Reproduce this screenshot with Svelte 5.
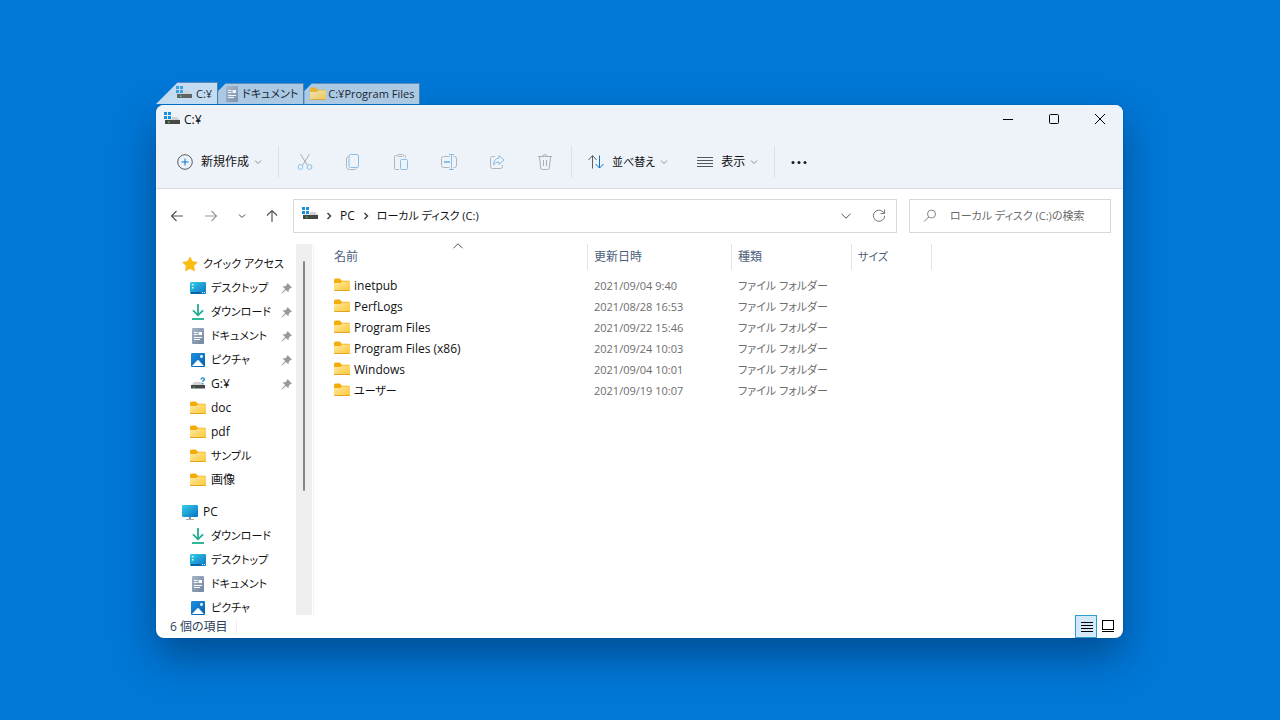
<script>
	const tabs = [
		{ label: 'C:¥', icon: 'drive' },
		{ label: 'ドキュメント', icon: 'document' },
		{ label: 'C:¥Program Files', icon: 'folder' }
	];

	const groups = [
		{
			label: 'クイック アクセス',
			icon: 'star',
			items: [
				{ label: 'デスクトップ', icon: 'desktop', pinned: true },
				{ label: 'ダウンロード', icon: 'download', pinned: true },
				{ label: 'ドキュメント', icon: 'document', pinned: true },
				{ label: 'ピクチャ', icon: 'picture', pinned: true },
				{ label: 'G:¥', icon: 'unknown', pinned: true },
				{ label: 'doc', icon: 'folder' },
				{ label: 'pdf', icon: 'folder' },
				{ label: 'サンプル', icon: 'folder' },
				{ label: '画像', icon: 'folder' }
			]
		},
		{
			label: 'PC',
			icon: 'pc',
			items: [
				{ label: 'ダウンロード', icon: 'download' },
				{ label: 'デスクトップ', icon: 'desktop' },
				{ label: 'ドキュメント', icon: 'document' },
				{ label: 'ピクチャ', icon: 'picture' }
			]
		}
	];

	const files = [
		{ name: 'inetpub', date: '2021/09/04 9:40' },
		{ name: 'PerfLogs', date: '2021/08/28 16:53' },
		{ name: 'Program Files', date: '2021/09/22 15:46' },
		{ name: 'Program Files (x86)', date: '2021/09/24 10:03' },
		{ name: 'Windows', date: '2021/09/04 10:01' },
		{ name: 'ユーザー', date: '2021/09/19 10:07' }
	];

	const actions = [
		{ icon: 'cut', label: '切り取り' },
		{ icon: 'copy', label: 'コピー' },
		{ icon: 'paste', label: '貼り付け' },
		{ icon: 'rename', label: '名前の変更' },
		{ icon: 'share', label: '共有' },
		{ icon: 'trash', label: '削除' }
	];

	let activeTab = $state(0);
	let query = $state('');
	let view = $state('details');

	// Katakana labels are set one size down from latin and kanji ones.
	function isKana(text) {
		return /[\u30a0-\u30ff]/.test(text);
	}
</script>

{#snippet icon(name)}
	<svg class="icon" viewBox="0 0 16 16" aria-hidden="true">
		{#if name === 'drive'}
			<path d="M0 0h3v3H0zM4 0h3v3H4zM0 4h3v3H0zM4 4h3v3H4z" fill="#1b8fe0" />
			<path d="M8 5h5l2.500 3H1.500L2 7.500h6z" fill="#d0d0d0" />
			<path d="M1 8h15v4H1z" fill="#464646" />
			<path d="M4 9.500h1.500V11H4z" fill="#35d63b" />
		{:else if name === 'unknown'}
			<path d="M4 6h7l3.500 3h-13z" fill="#d2d2d2" />
			<path d="M1 9h14v3.500H1z" fill="#464646" />
			<path d="M3 10.500h1.500v1H3z" fill="#35d63b" />
			<path d="M11 3.500q.2-1.700 1.700-1.700 1.600 0 1.600 1.400 0 .9-.8 1.400-.8.5-.8 1.200M12.700 7v1.300" fill="none" stroke="#1684cf" stroke-width="1.300" />
		{:else if name === 'folder'}
			<path d="M0 3.500Q0 1.500 1.500 1.500h4.300l2 2.300H14.500Q16 3.800 16 5v4H0z" fill="#f3ad0b" />
			<path d="M0 6h6.500L8.200 4.500H16v8.500q0 1-1 1H1q-1 0-1-1z" fill="url(#folder-fill)" />
			<path d="M.3 13.500h15.400" stroke="#e2a222" fill="none" />
		{:else if name === 'star'}
			<path d="M8 1l2.200 4.600 5.100.7-3.700 3.500.9 5L8 12.400l-4.500 2.400.9-5L.7 6.300l5.100-.7z" fill="#fbbd10" stroke="#f8ad08" stroke-width=".7" stroke-linejoin="round" />
		{:else if name === 'desktop'}
			<rect x="0" y="2" width="16" height="12" rx="1" fill="url(#screen-fill)" />
			<path d="M2 4h1.500v1.500H2zM2 7h1.500v1.500H2z" fill="#d8faff" />
			<path d="M1 12h10v2H1z" fill="#0863a9" />
			<path d="M12 12h1v1h-1zM14 12h1v1h-1z" fill="#d8faff" />
		{:else if name === 'download'}
			<path d="M8 0v11M3 6.300l5 5 5-5" fill="none" stroke="#20ac90" stroke-width="1.800" />
			<path d="M2 15h12" stroke="#20ac90" stroke-width="1.800" />
		{:else if name === 'document'}
			<rect x="2" y="0" width="12" height="16" rx="1" fill="url(#paper-fill)" />
			<path d="M4 4.500h3.500M4 6.500h3.500M4 9.500h8M4 11.500h6" stroke="#fff" />
			<path d="M8.500 4H12v3H8.500z" fill="#fff" />
		{:else if name === 'picture'}
			<rect x="1" y="1" width="14" height="14" rx="1" fill="url(#picture-fill)" />
			<path d="M2 14l5.200-5.600q.8-.8 1.600 0L14 14z" fill="#fff" />
			<circle cx="11.500" cy="4.500" r="1.400" fill="#fff" />
		{:else if name === 'pc'}
			<rect x="0" y="1" width="16" height="12" rx="1" fill="url(#screen-fill)" />
			<path d="M7 13h2v2H7z" fill="#879099" />
			<path d="M4 15.500h8" stroke="#a5adb4" />
		{:else if name === 'cut'}
			<g fill="none">
				<path d="M3.500 0l6.700 11M12.500 0L5.800 11" stroke="#a9afb5" />
				<circle cx="3.500" cy="13" r="2.400" stroke="#86bfe8" />
				<circle cx="12.500" cy="13" r="2.400" stroke="#86bfe8" />
			</g>
		{:else if name === 'copy'}
			<g fill="none">
				<path d="M3.500 2.500Q1.500 3 1.500 5v7.500q0 3 3 3h5q1.500 0 2-1" stroke="#b0b5ba" />
				<rect x="4" y=".5" width="9.500" height="13" rx="1.500" stroke="#86bfe8" />
			</g>
		{:else if name === 'paste'}
			<g fill="none">
				<path d="M4 1.500H2.500q-1 0-1 1v12q0 1 1 1H6M10.500 1.500h1q1 0 1 1V4" stroke="#b0b5ba" />
				<rect x="4.500" y=".5" width="6" height="2" rx="1" stroke="#b0b5ba" />
				<rect x="7.500" y="5.500" width="7" height="10" rx="1" stroke="#86bfe8" />
			</g>
		{:else if name === 'rename'}
			<g fill="none">
				<path d="M8.500 2.500H2.500q-2 0-2 2v7q0 2 2 2h6M12.500 2.500h1q2 0 2 2v7q0 2-2 2h-1" stroke="#b0b5ba" />
				<path d="M3 8h6" stroke="#86bfe8" stroke-width="2" />
				<path d="M8 .5h5M8 15.500h5M10.500.5v15" stroke="#86bfe8" />
			</g>
		{:else if name === 'share'}
			<g fill="none">
				<path d="M6 2.500H3.500q-2 0-2 2v8q0 2 2 2h8q2 0 2-2V11" stroke="#b0b5ba" />
				<path d="M10 1.500l5 4.500-5 4.500V8Q6.500 7.800 4.500 11 4.700 4.500 10 4z" stroke="#86bfe8" stroke-linejoin="round" />
			</g>
		{:else if name === 'trash'}
			<path d="M1 2.500h14M5.500 2.500q.5-2 2.500-2t2.500 2M2.500 3l1.200 11q.2 1.500 1.700 1.500h5.200q1.500 0 1.700-1.500l1.200-11M6.500 6v6M9.500 6v6" fill="none" stroke="#a9afb5" />
		{:else if name === 'add'}
			<circle cx="8" cy="8" r="7.300" fill="none" stroke="#565b60" />
			<path d="M8 4.500v7M4.500 8h7" stroke="#0874c9" />
		{:else if name === 'sort'}
			<path d="M4.500 14.500V2M.5 6l4-4.500 4 4.500" fill="none" stroke="#5b5f63" />
			<path d="M11.500 1.500V14M7.500 10l4 4 4-4" fill="none" stroke="#0874c9" />
		{:else if name === 'lines'}
			<path d="M0 3.500h16M0 6.500h16M0 9.500h16M0 12.500h16" stroke="#53575b" />
		{:else if name === 'dots'}
			<g fill="#1c1c1c">
				<circle cx="2" cy="8.500" r="1.500" />
				<circle cx="8" cy="8.500" r="1.500" />
				<circle cx="14" cy="8.500" r="1.500" />
			</g>
		{:else if name === 'back'}
			<path d="M14 8H2.500M7.500 3l-5 5 5 5" fill="none" stroke="#555" stroke-width="1.200" />
		{:else if name === 'forward'}
			<path d="M2 8h11.500M8.500 3l5 5-5 5" fill="none" stroke="#999" stroke-width="1.200" />
		{:else if name === 'up'}
			<path d="M8 14V2.500M3 7.500l5-5 5 5" fill="none" stroke="#555" stroke-width="1.200" />
		{:else if name === 'refresh'}
			<path d="M13.600 7.800A5.600 5.600 0 1 1 12 3.800L13.500 5.200M13.600 1.500v4h-4" fill="none" stroke="#777" />
		{:else if name === 'search'}
			<circle cx="9.500" cy="6" r="4" fill="none" stroke="#858585" />
			<path d="M6.700 9L2 13.700" stroke="#858585" />
		{:else if name === 'minimize'}
			<path d="M3 7.500h10" stroke="#000" />
		{:else if name === 'maximize'}
			<rect x="3.500" y="2.500" width="9" height="9" rx="1" fill="none" stroke="#000" />
		{:else if name === 'close'}
			<path d="M3 2l10 10M13 2L3 12" stroke="#000" fill="none" />
		{:else if name === 'details'}
			<path d="M3 3.500h12M3 6.500h12M3 9.500h12M3 12.500h12" stroke="#000" />
		{:else if name === 'tiles'}
			<rect x="2.500" y="1.500" width="11" height="9" fill="none" stroke="#000" />
			<path d="M2 12.500h12" stroke="#000" />
		{/if}
	</svg>
{/snippet}

{#snippet chevron(direction, color)}
	<svg class="chevron {direction}" viewBox="0 0 8 8" aria-hidden="true">
		<path d="M1 2.500l3 3 3-3" fill="none" stroke={color} vector-effect="non-scaling-stroke" />
	</svg>
{/snippet}

{#snippet crumb()}
	<svg class="chevron" viewBox="0 0 8 8" aria-hidden="true">
		<path d="M2.500 1L5.500 4 2.500 7" fill="none" stroke="#444" stroke-width="1.500" />
	</svg>
{/snippet}

{#snippet pin()}
	<svg class="pin" viewBox="0 0 12 12" aria-hidden="true">
		<path d="M6.500 1L11 5.500l-1.500.6-1.800 1.800-.2 2.600-2.600-2.600L1 11.500.5 11l3.600-3.900-2.600-2.600 2.600-.2L6 2.500z" fill="#939ba2" />
	</svg>
{/snippet}

<svg class="defs" width="0" height="0" aria-hidden="true">
	<defs>
		<linearGradient id="folder-fill" x1="0" y1="0" x2="1" y2="1">
			<stop offset="0" stop-color="#ffe9a3" />
			<stop offset="1" stop-color="#fec735" />
		</linearGradient>
		<linearGradient id="screen-fill" x1="0" y1="0" x2="1" y2="1">
			<stop offset="0" stop-color="#35cfe8" />
			<stop offset="1" stop-color="#0a72c4" />
		</linearGradient>
		<linearGradient id="paper-fill" x1="0" y1="0" x2="1" y2="1">
			<stop offset="0" stop-color="#a5b4c8" />
			<stop offset="1" stop-color="#73849f" />
		</linearGradient>
		<linearGradient id="picture-fill" x1="0" y1="0" x2="1" y2="1">
			<stop offset="0" stop-color="#1b91e2" />
			<stop offset="1" stop-color="#0660ad" />
		</linearGradient>
	</defs>
</svg>

<div class="desktop">
	<div class="tabs" role="tablist">
		{#each tabs as tab, i}
			<button
				class="tab"
				class:active={activeTab === i}
				role="tab"
				aria-selected={activeTab === i}
				onclick={() => (activeTab = i)}
			>
				{@render icon(tab.icon)}
				<span>{tab.label}</span>
			</button>
		{/each}
	</div>

	<main class="window">
		<header class="titlebar">
			{@render icon('drive')}
			<h1>C:¥</h1>
			<div class="controls">
				<button aria-label="最小化">{@render icon('minimize')}</button>
				<button aria-label="最大化">{@render icon('maximize')}</button>
				<button aria-label="閉じる">{@render icon('close')}</button>
			</div>
		</header>

		<div class="toolbar">
			<button class="command">
				{@render icon('add')}
				<span>新規作成</span>
				{@render chevron('down', '#8b8f94')}
			</button>
			<div class="actions">
				{#each actions as action}
					<button aria-label={action.label} disabled>{@render icon(action.icon)}</button>
				{/each}
			</div>
			<button class="command">
				{@render icon('sort')}
				<span class="kana">並べ替え</span>
				{@render chevron('down', '#8b8f94')}
			</button>
			<button class="command view">
				{@render icon('lines')}
				<span>表示</span>
				{@render chevron('down', '#8b8f94')}
			</button>
			<button class="command more" aria-label="もっと見る">{@render icon('dots')}</button>
		</div>

		<div class="location">
			<div class="history">
				<button aria-label="戻る">{@render icon('back')}</button>
				<button aria-label="進む">{@render icon('forward')}</button>
				<button aria-label="最近表示した場所">{@render chevron('down', '#444')}</button>
				<button aria-label="上へ">{@render icon('up')}</button>
			</div>
			<nav class="address" aria-label="アドレス">
				{@render icon('drive')}
				{@render crumb()}
				<a href="#pc">PC</a>
				{@render crumb()}
				<a class="kana" href="#c">ローカル ディスク (C:)</a>
				<button class="expand" aria-label="以前の場所">{@render chevron('down large', '#555')}</button>
				<button aria-label="最新の情報に更新">{@render icon('refresh')}</button>
			</nav>
			<label class="search">
				{@render icon('search')}
				<input
					class="kana"
					type="text"
					aria-label="検索"
					placeholder="ローカル ディスク (C:)の検索"
					bind:value={query}
				/>
			</label>
		</div>

		<div class="body">
			<nav class="tree" aria-label="ナビゲーション">
				{#each groups as group}
					<section>
						<a class="node" href="#top">
							{@render icon(group.icon)}
							<span class:kana={isKana(group.label)}>{group.label}</span>
						</a>
						{#each group.items as item}
							<a class="node child" href="#item">
								{@render icon(item.icon)}
								<span class:kana={isKana(item.label)}>{item.label}</span>
								{#if item.pinned}{@render pin()}{/if}
							</a>
						{/each}
					</section>
				{/each}
			</nav>
			<div class="scrollbar"><div class="thumb"></div></div>

			<div class="content">
				<table>
					<thead>
						<tr>
							<th class="name">名前 <span class="sorted">{@render chevron('up large', '#555')}</span></th>
							<th class="date">更新日時</th>
							<th class="type">種類</th>
							<th class="size kana">サイズ</th>
							<th class="rest"></th>
						</tr>
					</thead>
					<tbody>
						{#each files as file}
							<tr>
								<td>
									<div class="file">
										{@render icon('folder')}
										<span class:kana={isKana(file.name)}>{file.name}</span>
									</div>
								</td>
								<td class="meta">{file.date}</td>
								<td class="meta">ファイル フォルダー</td>
								<td></td>
								<td></td>
							</tr>
						{/each}
					</tbody>
				</table>
			</div>
		</div>

		<footer class="status">
			<span class="count">6 個の項目</span>
			<div class="views">
				<button class:selected={view === 'details'} aria-label="詳細" onclick={() => (view = 'details')}>
					{@render icon('details')}
				</button>
				<button class:selected={view === 'tiles'} aria-label="大アイコン" onclick={() => (view = 'tiles')}>
					{@render icon('tiles')}
				</button>
			</div>
		</footer>
	</main>
</div>

<style>
	:global(body) {
		margin: 0;
		background: #0078d7;
	}

	.desktop {
		display: flex;
		flex-direction: column;
		height: 100vh;
		padding: 82px 157px 82px 156px;
		box-sizing: border-box;
		font-family: 'Open Sans', 'Noto Sans CJK JP', sans-serif;
		font-size: 12px;
		line-height: 16px;
		font-feature-settings: 'palt';
		white-space: nowrap;
		color: #111;
	}

	.defs {
		position: absolute;
	}

	button {
		display: flex;
		align-items: center;
		justify-content: center;
		padding: 0;
		border: 0;
		background: none;
		font: inherit;
		font-feature-settings: inherit;
		color: inherit;
	}

	a {
		color: inherit;
		text-decoration: none;
	}

	.icon {
		flex: none;
		width: 16px;
		height: 16px;
	}

	.chevron {
		flex: none;
		width: 8px;
		height: 8px;
	}

	.chevron.large {
		width: 12px;
		height: 12px;
	}

	.chevron.up {
		transform: rotate(180deg);
	}

	.tabs {
		display: flex;
		align-items: flex-end;
		height: 22px;
		margin-bottom: 1px;
		font-size: 11px;
	}

	.tab {
		gap: 2px;
		height: 21px;
		padding: 0 5px 0 6px;
		box-sizing: border-box;
		border-top: 1px solid #5d8db8;
		border-right: 1px solid #4f80ac;
		background: #abc9e3;
		clip-path: polygon(0 8px, 8px 0, 100% 0, 100% 100%, 0 100%);
		color: #1a2733;
	}

	.tab.active {
		gap: 4px;
		height: 22px;
		padding-left: 20px;
		background: #c3dcf2;
		clip-path: polygon(0 100%, 22px 0, 100% 0, 100% 100%);
	}

	.tab .icon {
		opacity: 0.8;
	}

	.window {
		display: flex;
		flex: 1;
		flex-direction: column;
		min-height: 0;
		border-radius: 8px;
		overflow: hidden;
		background: #fff;
		box-shadow:
			0 0 1px rgba(0, 0, 0, 0.5),
			0 18px 40px rgba(0, 20, 50, 0.42);
	}

	.titlebar {
		display: flex;
		align-items: center;
		gap: 4px;
		height: 29px;
		padding: 0 0 2px 8px;
		background: #eef3fa;
	}

	h1 {
		margin: 0;
		font-size: 12px;
		font-weight: 400;
	}

	.controls {
		display: flex;
		margin-left: auto;
	}

	.controls button {
		width: 46px;
		height: 28px;
	}

	.toolbar {
		display: flex;
		align-items: center;
		height: 52px;
		padding-left: 21px;
		border-bottom: 1px solid #d8dde3;
		background: #eef3fa;
	}

	.command {
		gap: 8px;
	}

	.command .chevron {
		margin-left: -3px;
	}

	.actions {
		display: flex;
		padding: 0 2px;
		margin: 0 16px;
		border: solid #dce1e8;
		border-width: 0 1px;
	}

	.actions button {
		width: 48px;
		height: 32px;
	}

	.view {
		margin: 0 16px 0 29px;
	}

	.more {
		height: 32px;
		padding-left: 16px;
		border-left: 1px solid #dce1e8;
	}

	.location {
		display: flex;
		align-items: center;
		gap: 12px;
		height: 53px;
		padding: 0 12px 2px 0;
	}

	.history {
		display: flex;
		align-items: center;
		justify-content: space-between;
		width: 111px;
		padding: 0 1px 0 13px;
	}

	.address,
	.search {
		display: flex;
		align-items: center;
		height: 34px;
		box-sizing: border-box;
		border: 1px solid #d9d9d9;
	}

	.address {
		flex: 1;
		gap: 7px;
		padding: 0 9px 0 8px;
	}

	.address > .icon {
		margin-bottom: 2px;
	}

	.expand {
		margin-left: auto;
		margin-right: 12px;
	}

	.search {
		width: 202px;
		gap: 12px;
		padding: 0 12px;
	}

	.search input {
		flex: 1;
		min-width: 0;
		padding: 0;
		border: 0;
		outline: 0;
		font: inherit;
		font-feature-settings: inherit;
	}

	.search input::placeholder {
		color: #6b6b6b;
	}

	.body {
		display: flex;
		flex: 1;
		min-height: 0;
	}

	.tree {
		width: 140px;
		padding-top: 8px;
		box-sizing: border-box;
		overflow: hidden;
	}

	.tree section {
		margin-bottom: 8px;
	}

	.node {
		display: flex;
		align-items: center;
		gap: 5px;
		height: 24px;
		padding: 0 3px 0 26px;
	}

	.node.child {
		padding-left: 34px;
	}

	.pin {
		flex: none;
		width: 12px;
		height: 12px;
		margin-left: auto;
	}

	.scrollbar {
		display: flex;
		justify-content: center;
		width: 16px;
		padding-top: 17px;
		box-sizing: border-box;
		background: #efefef;
	}

	.thumb {
		width: 2px;
		height: 65%;
		border-radius: 1px;
		background: #858585;
	}

	.content {
		flex: 1;
		min-width: 0;
		padding-left: 14px;
		margin-left: 1px;
		border-left: 1px solid #f3f3f3;
	}

	table {
		width: 100%;
		table-layout: fixed;
		border-collapse: separate;
		border-spacing: 0;
	}

	th {
		position: relative;
		height: 26px;
		padding: 0 6px;
		box-sizing: border-box;
		border-right: 1px solid #e3e3e3;
		text-align: left;
		font-weight: 400;
		color: #4c607a;
	}

	th.rest {
		border: 0;
	}

	.name {
		width: 260px;
	}

	.date {
		width: 144px;
	}

	.type {
		width: 120px;
	}

	.size {
		width: 80px;
	}

	.sorted {
		position: absolute;
		top: -4px;
		left: 50%;
		margin-left: -6px;
	}

	tbody::before {
		content: '';
		display: block;
		height: 5px;
	}

	td {
		height: 21px;
		padding: 0 6px;
	}

	.file {
		display: flex;
		align-items: center;
		gap: 4px;
	}

	.file .icon {
		margin-bottom: 2px;
	}

	.meta {
		font-size: 11px;
		color: #6d6d6d;
	}

	.kana,
	.search .kana {
		font-size: 11px;
	}

	.status {
		display: flex;
		align-items: center;
		justify-content: space-between;
		height: 23px;
		padding: 0 5px 0 14px;
		color: #2a3f5c;
	}

	.count {
		padding-right: 8px;
		border-right: 1px solid #f0f0f0;
	}

	.views {
		display: flex;
	}

	.views button {
		width: 21px;
		height: 23px;
		box-sizing: border-box;
	}

	.views .selected {
		width: 22px;
		border: 1px solid #2a9fd6;
		background: #d4e9f7;
	}
</style>
